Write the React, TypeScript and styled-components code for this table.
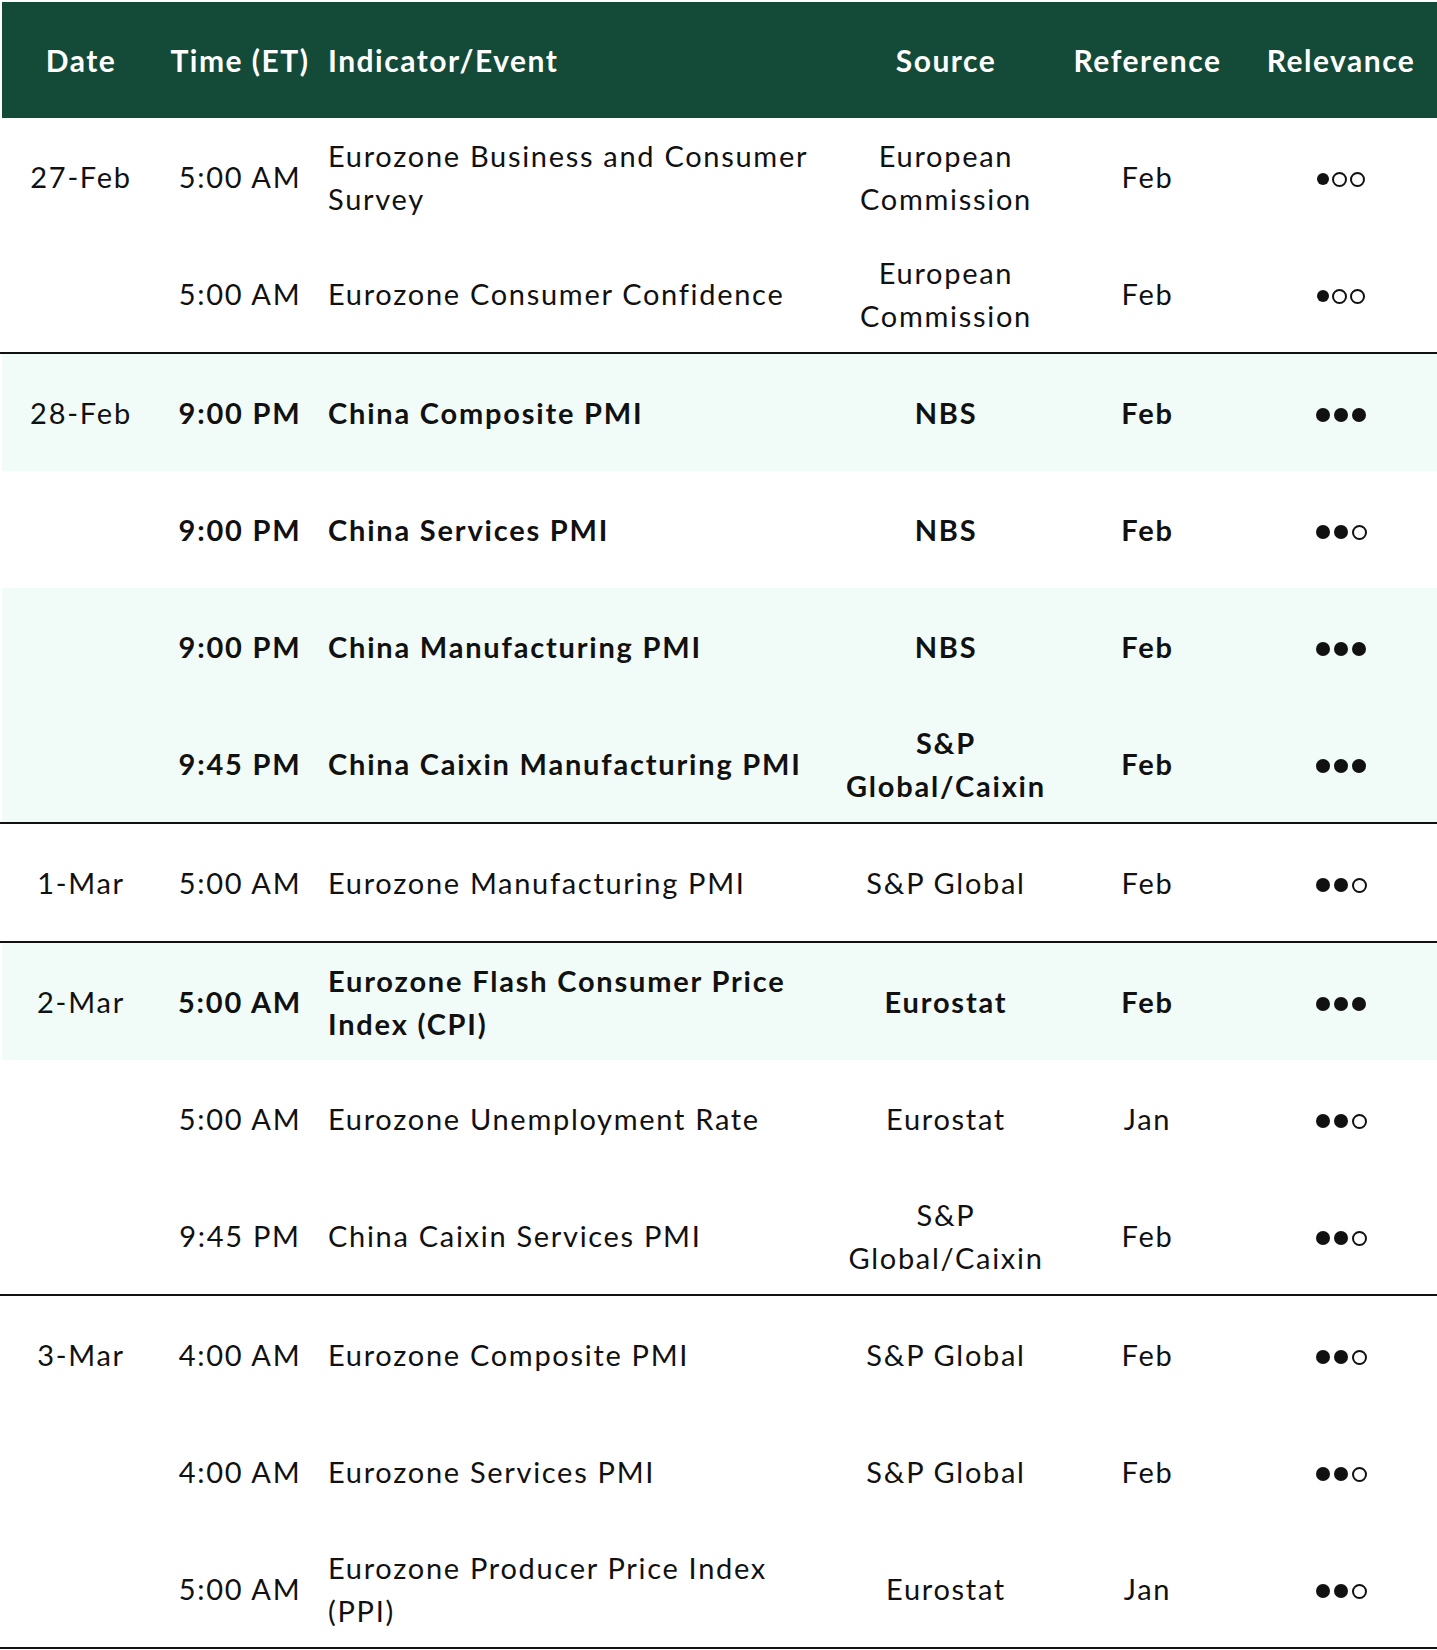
import styled, { createGlobalStyle } from "styled-components";

type Event = {
  time: string;
  event: string;
  source: string;
  ref: string;
  rel: 1 | 2 | 3;
  bold?: boolean;
  shaded?: boolean;
};

type Group = { date: string; rows: Event[] };

const groups: Group[] = [
  {
    date: "27-Feb",
    rows: [
      { time: "5:00 AM", event: "Eurozone Business and Consumer Survey", source: "European Commission", ref: "Feb", rel: 1 },
      { time: "5:00 AM", event: "Eurozone Consumer Confidence", source: "European Commission", ref: "Feb", rel: 1 },
    ],
  },
  {
    date: "28-Feb",
    rows: [
      { time: "9:00 PM", event: "China Composite PMI", source: "NBS", ref: "Feb", rel: 3, bold: true, shaded: true },
      { time: "9:00 PM", event: "China Services PMI", source: "NBS", ref: "Feb", rel: 2, bold: true },
      { time: "9:00 PM", event: "China Manufacturing PMI", source: "NBS", ref: "Feb", rel: 3, bold: true, shaded: true },
      { time: "9:45 PM", event: "China Caixin Manufacturing PMI", source: "S&P Global/Caixin", ref: "Feb", rel: 3, bold: true, shaded: true },
    ],
  },
  {
    date: "1-Mar",
    rows: [
      { time: "5:00 AM", event: "Eurozone Manufacturing PMI", source: "S&P Global", ref: "Feb", rel: 2 },
    ],
  },
  {
    date: "2-Mar",
    rows: [
      { time: "5:00 AM", event: "Eurozone Flash Consumer Price Index (CPI)", source: "Eurostat", ref: "Feb", rel: 3, bold: true, shaded: true },
      { time: "5:00 AM", event: "Eurozone Unemployment Rate", source: "Eurostat", ref: "Jan", rel: 2 },
      { time: "9:45 PM", event: "China Caixin Services PMI", source: "S&P Global/Caixin", ref: "Feb", rel: 2 },
    ],
  },
  {
    date: "3-Mar",
    rows: [
      { time: "4:00 AM", event: "Eurozone Composite PMI", source: "S&P Global", ref: "Feb", rel: 2 },
      { time: "4:00 AM", event: "Eurozone Services PMI", source: "S&P Global", ref: "Feb", rel: 2 },
      { time: "5:00 AM", event: "Eurozone Producer Price Index (PPI)", source: "Eurostat", ref: "Jan", rel: 2 },
    ],
  },
];

const GlobalStyle = createGlobalStyle`
  * { box-sizing: border-box; }
  body {
    margin: 0;
    background: #fff;
    font-family: Lato, "Open Sans", sans-serif;
    color: #111;
  }
`;

const columns = "162px 156px 524px 208px 195px 192px";

const Table = styled.div`
  width: 1437px;
  padding-top: 2px;
`;

const HeaderRow = styled.div`
  display: grid;
  grid-template-columns: ${columns};
  height: 116px;
  align-items: center;
  background: #134a38;
  box-shadow: inset 2px 0 #fff;
  color: #fff;
  font-size: 30px;
  font-weight: 700;
  letter-spacing: 1.5px;
`;

const Row = styled.div<{ $shaded?: boolean; $last?: boolean; $bold?: boolean }>`
  display: grid;
  grid-template-columns: ${columns};
  height: ${(p) => (p.$last ? 119 : 117)}px;
  align-items: center;
  background: ${(p) => (p.$shaded ? "#f1fbf7" : "#fff")};
  box-shadow: inset 2px 0 #fff;
  border-bottom: ${(p) => (p.$last ? "2px solid #111" : "none")};
  font-size: 29px;
  line-height: 43px;
  font-weight: ${(p) => (p.$bold ? 700 : 400)};
  letter-spacing: ${(p) => (p.$bold ? 1.8 : 1.7)}px;
`;

const Cell = styled.div<{ $align?: "left" | "center"; $regular?: boolean }>`
  text-align: ${(p) => p.$align ?? "center"};
  padding: ${(p) => (p.$align === "left" ? "0 14px 0 10px" : "0 2px")};
  font-weight: ${(p) => (p.$regular ? 400 : "inherit")};
`;

const Dots = styled.div<{ $gap: number }>`
  display: flex;
  justify-content: center;
  align-items: center;
  gap: ${(p) => p.$gap}px;
  margin-top: 5px;
`;

const Dot = styled.span<{ $filled: boolean; $size: number }>`
  width: ${(p) => p.$size}px;
  height: ${(p) => p.$size}px;
  border-radius: 50%;
  background: ${(p) => (p.$filled ? "#111" : "transparent")};
  border: ${(p) => (p.$filled ? "none" : "2px solid #111")};
`;

function Relevance({ level }: { level: number }) {
  const low = level === 1;
  return (
    <Dots $gap={low ? 3 : 4}>
      {[0, 1, 2].map((i) => {
        const filled = i < level;
        const size = low ? (filled ? 12 : 15) : filled ? 14 : 15;
        return <Dot key={i} $filled={filled} $size={size} />;
      })}
    </Dots>
  );
}

export default function App() {
  return (
    <>
      <GlobalStyle />
      <Table>
        <HeaderRow>
          <Cell>Date</Cell>
          <Cell>Time (ET)</Cell>
          <Cell $align="left">Indicator/Event</Cell>
          <Cell>Source</Cell>
          <Cell>Reference</Cell>
          <Cell>Relevance</Cell>
        </HeaderRow>
        {groups.map((g) =>
          g.rows.map((r, i) => (
            <Row
              key={g.date + i}
              $shaded={r.shaded}
              $bold={r.bold}
              $last={i === g.rows.length - 1}
            >
              <Cell $regular>{i === 0 ? g.date : ""}</Cell>
              <Cell>{r.time}</Cell>
              <Cell $align="left">{r.event}</Cell>
              <Cell>{r.source}</Cell>
              <Cell>{r.ref}</Cell>
              <Relevance level={r.rel} />
            </Row>
          ))
        )}
      </Table>
    </>
  );
}
